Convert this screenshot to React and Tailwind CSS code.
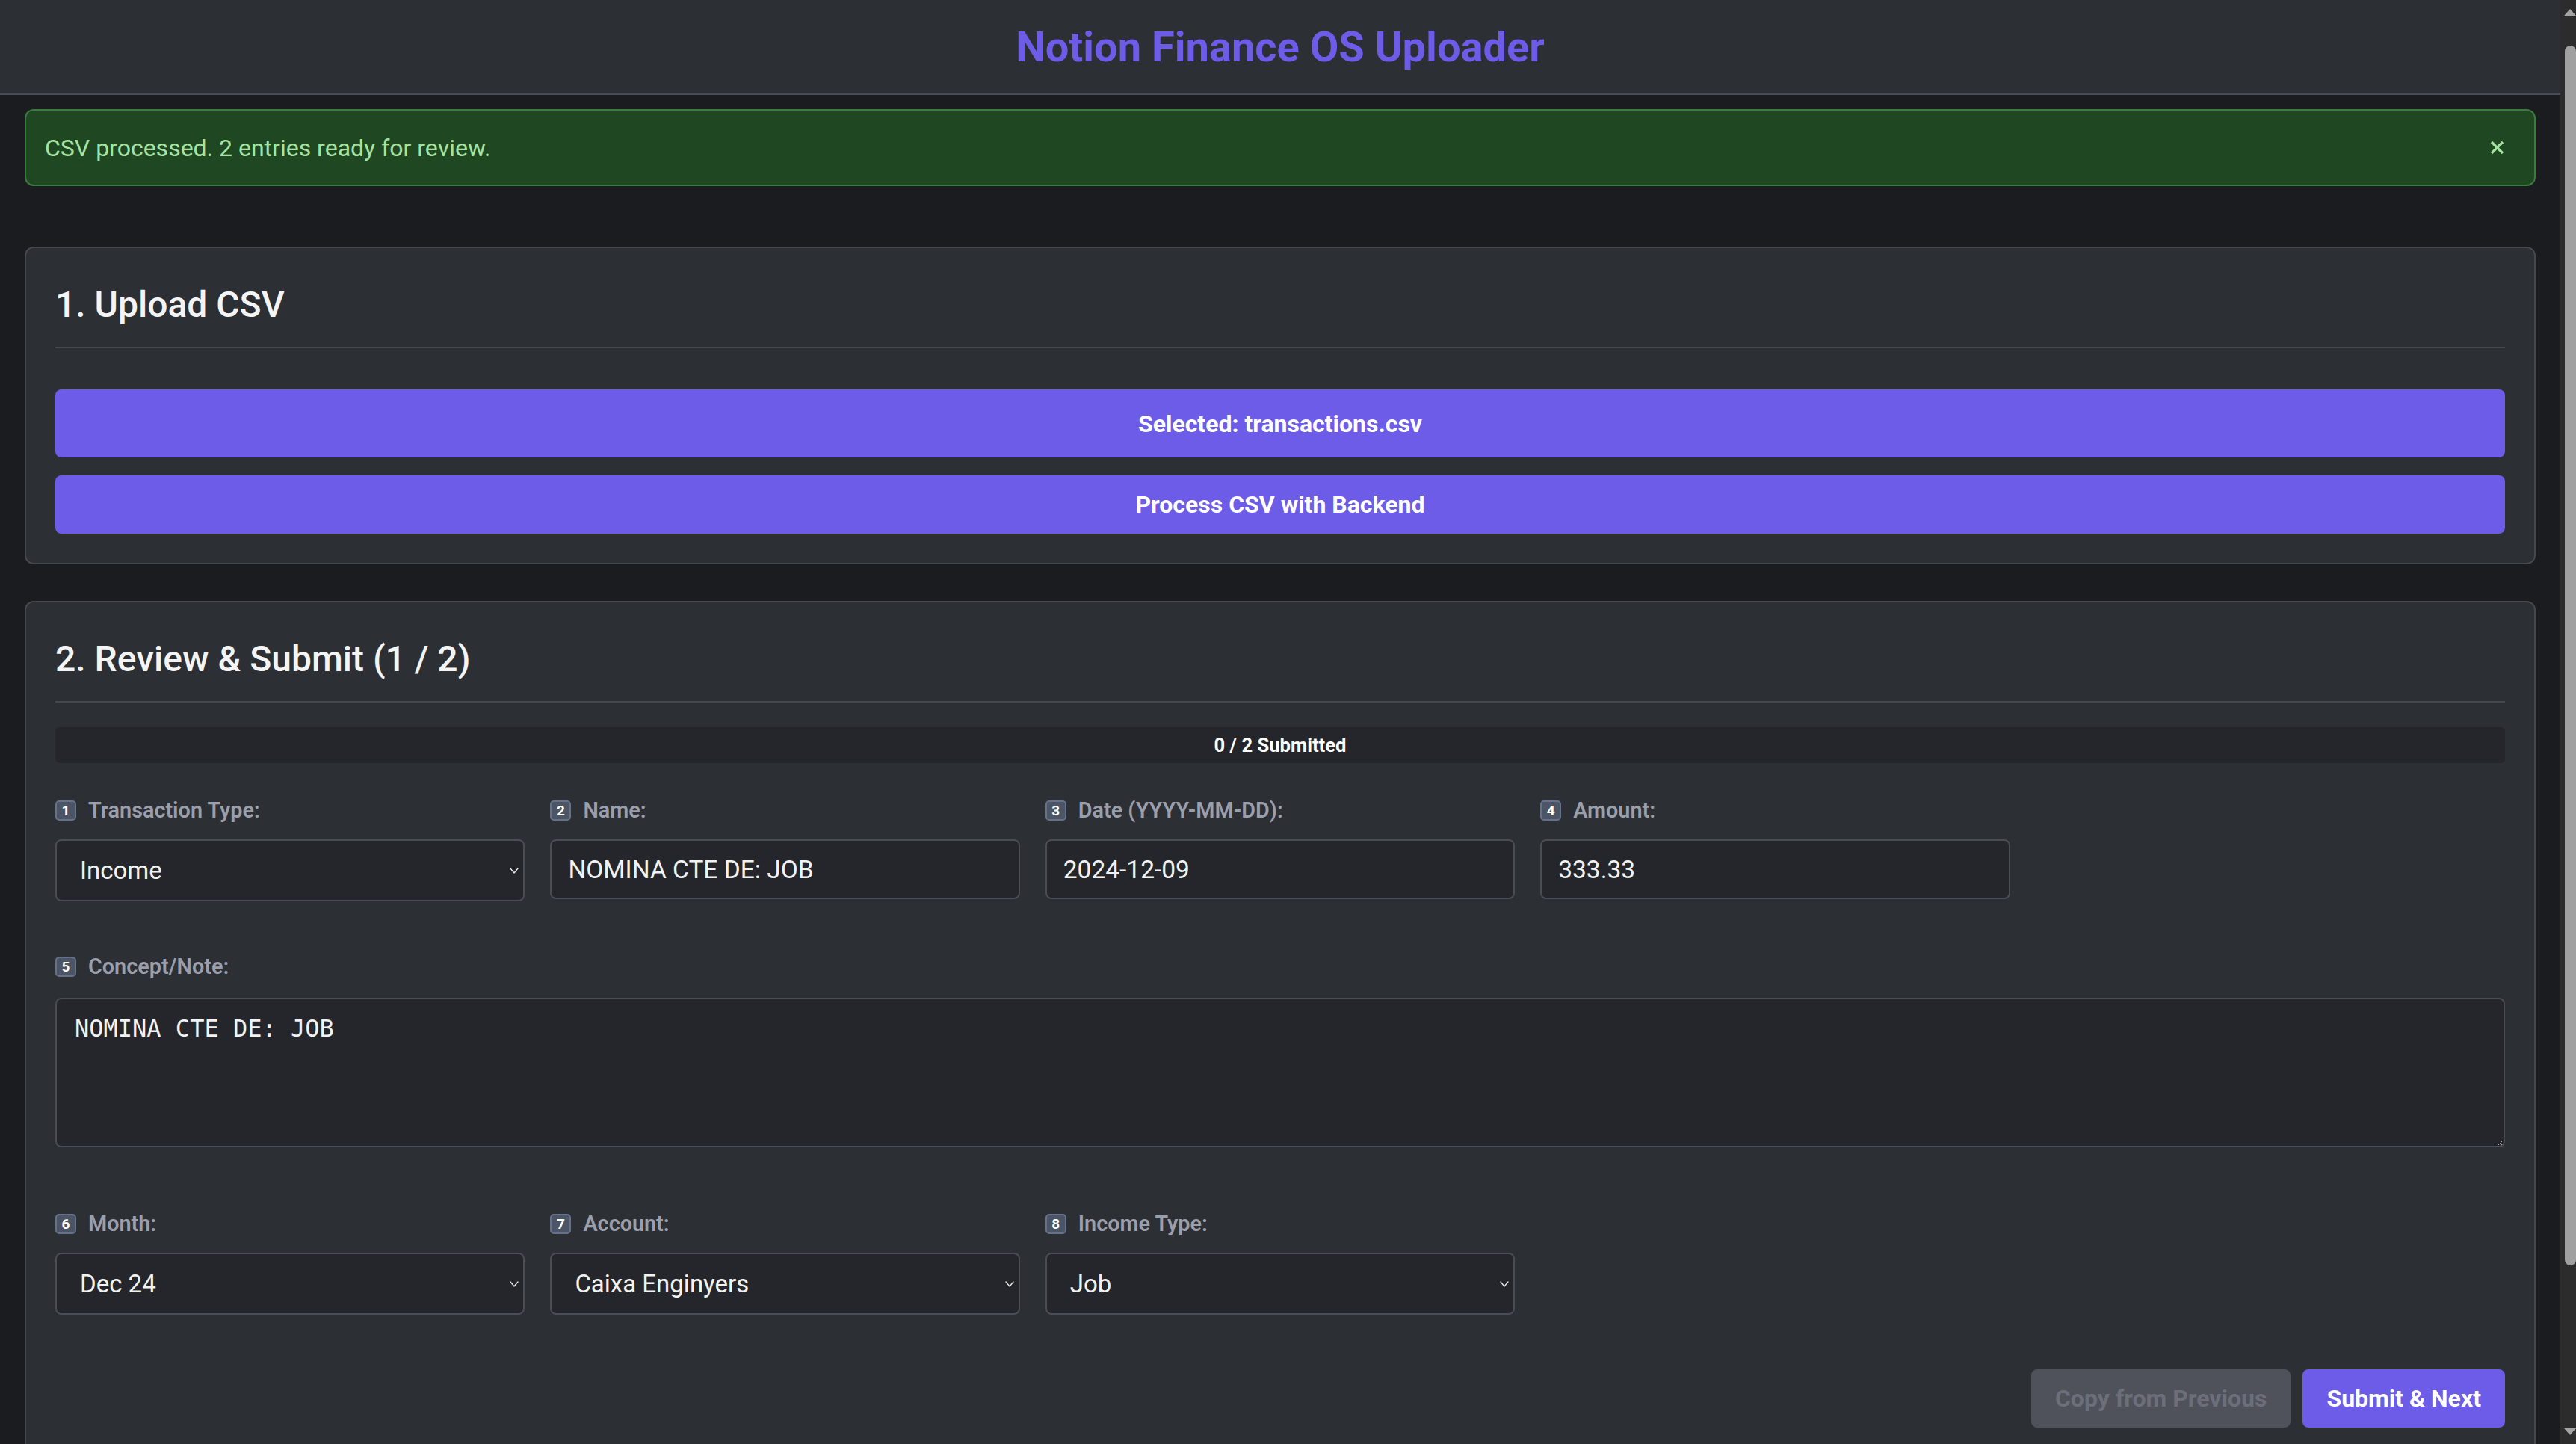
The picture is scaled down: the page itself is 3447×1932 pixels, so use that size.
import React from 'react';

const fieldLabel = "flex items-center gap-[16px] h-[30px] text-[28.8px] font-semibold text-[#9b9eab] leading-none";
const inputBase = "w-full bg-[#24262b] border-2 border-[#4a4d55] rounded-[8px] text-[#f2f2f2] outline-none font-[Roboto,sans-serif]";

function Badge({ n }) {
  return (
    <span className="flex items-center justify-center w-[28px] h-[27px] rounded-[5px] bg-[#4b5566] border-2 border-[#66718a] text-white text-[19px] font-bold leading-none">
      {n}
    </span>
  );
}

function Label({ n, children, className = "mb-[24px]" }) {
  return (
    <div className={`${fieldLabel} ${className}`}>
      <Badge n={n} />
      <span>{children}</span>
    </div>
  );
}

function Chevron() {
  return (
    <svg className="absolute right-[8px] top-1/2 -translate-y-1/2 pointer-events-none" width="12" height="9" viewBox="0 0 12 9" fill="none" stroke="#e5e5e5" strokeWidth="1.4" strokeLinecap="round" strokeLinejoin="round">
      <polyline points="1 1.5 6 7.5 11 1.5" />
    </svg>
  );
}

function SelectField({ n, label, value, options }) {
  return (
    <div>
      <Label n={n}>{label}</Label>
      <div className="relative">
        <select defaultValue={value} className={`${inputBase} appearance-none h-[83px] pl-[31px] pr-[40px] text-[33px]`}>
          {options.map((o) => (
            <option key={o}>{o}</option>
          ))}
        </select>
        <Chevron />
      </div>
    </div>
  );
}

function TextField({ n, label, value }) {
  return (
    <div>
      <Label n={n}>{label}</Label>
      <input type="text" defaultValue={value} className={`${inputBase} h-[80px] px-[22px] text-[33.5px]`} />
    </div>
  );
}

function Card({ title, children }) {
  return (
    <section className="mx-[33px] bg-[#2c2f34] border-2 border-[#45484f] rounded-[12px] px-[39px] pt-[39px] pb-[39px]">
      <h2 className="mt-[9px] pb-[28px] border-b-2 border-[#45484f] text-[48px] leading-[56px] font-medium text-[#f4f4f4]">
        {title}
      </h2>
      {children}
    </section>
  );
}

function Scrollbar() {
  return (
    <aside className="fixed top-0 right-0 w-[21px] h-screen bg-[#2c2c2c] flex flex-col items-end">
      <svg className="mt-[12px]" width="16" height="9" viewBox="0 0 16 9">
        <polygon points="8 0 16 9 0 9" fill="#a3a3a3" />
      </svg>
      <div className="mt-[40px] w-[15px] h-[1632px] rounded-t-full rounded-b-full bg-[#a0a0a0]" />
      <svg className="mt-auto mb-[12px]" width="16" height="9" viewBox="0 0 16 9">
        <polygon points="0 0 16 0 8 9" fill="#a3a3a3" />
      </svg>
    </aside>
  );
}

export default function App() {
  return (
    <div className="min-h-screen bg-[#1b1c1f] font-[Roboto,sans-serif] pr-[21px]">
      <div className="pb-[33px]">
        <header className="h-[127px] bg-[#2c2f34] border-b-2 border-[#4a4d55] flex items-center justify-center">
          <h1 className="text-[56px] font-bold text-[#6c5ce7] leading-none">Notion Finance OS Uploader</h1>
        </header>

        <div className="mx-[33px] mt-[19px] mb-[81px] h-[103px] bg-[#1f4722] border-2 border-[#3d7a3f] rounded-[12px] pl-[25px] pr-[40px] flex items-center justify-between">
          <span className="text-[32px] text-[#a6e3a2]">CSV processed. 2 entries ready for review.</span>
          <button className="flex items-center justify-center">
            <svg width="19" height="19" viewBox="0 0 19 19" fill="none" stroke="#a6e3a2" strokeWidth="3.4">
              <line x1="2" y1="2" x2="17" y2="17" />
              <line x1="17" y1="2" x2="2" y2="17" />
            </svg>
          </button>
        </div>

        <Card title="1. Upload CSV">
          <div className="mt-[55px] flex flex-col gap-[24px]">
            <button className="h-[91px] w-full rounded-[8px] bg-[#6c5ce7] text-white text-[32px] font-bold">
              Selected: transactions.csv
            </button>
            <button className="h-[78px] w-full rounded-[8px] bg-[#6c5ce7] text-white text-[32px] font-bold">
              Process CSV with Backend
            </button>
          </div>
        </Card>

        <div className="h-[49px]" />

        <Card title="2. Review & Submit (1 / 2)">
          <div className="mt-[33px] h-[48px] rounded-[6px] bg-[#24262b] flex items-center justify-center text-[25.6px] font-bold text-white">
            0 / 2 Submitted
          </div>

          <div className="mt-[48px] grid grid-cols-5 gap-x-[34px] gap-y-[72px] items-start">
            <SelectField n="1" label="Transaction Type:" value="Income" options={["Income", "Expense", "Transfer"]} />
            <TextField n="2" label="Name:" value="NOMINA CTE DE: JOB" />
            <TextField n="3" label="Date (YYYY-MM-DD):" value="2024-12-09" />
            <TextField n="4" label="Amount:" value="333.33" />
            <div />

            <div className="col-span-5 mb-[15px]">
              <Label n="5" className="mb-[27px]">Concept/Note:</Label>
              <textarea
                defaultValue="NOMINA CTE DE: JOB"
                className="block w-full h-[200px] bg-[#24262b] border-2 border-[#4a4d55] rounded-[8px] px-[24px] pt-[15px] pb-[19px] text-[32px] text-[#f2f2f2] outline-none font-['DejaVu_Sans_Mono',monospace]"
              />
            </div>

            <SelectField n="6" label="Month:" value="Dec 24" options={["Nov 24", "Dec 24", "Jan 25"]} />
            <SelectField n="7" label="Account:" value="Caixa Enginyers" options={["Caixa Enginyers", "Revolut", "Cash"]} />
            <SelectField n="8" label="Income Type:" value="Job" options={["Job", "Freelance", "Other"]} />
          </div>

          <div className="mt-[73px] flex justify-end gap-[16px]">
            <button disabled className="h-[78px] px-[32px] rounded-[8px] bg-[#4f525a] text-[#6c6f7a] text-[32px] font-bold">
              Copy from Previous
            </button>
            <button className="h-[78px] px-[32px] rounded-[8px] bg-[#6c5ce7] text-white text-[32px] font-bold">
              Submit &amp; Next
            </button>
          </div>
        </Card>
      </div>
      <Scrollbar />
    </div>
  );
}
